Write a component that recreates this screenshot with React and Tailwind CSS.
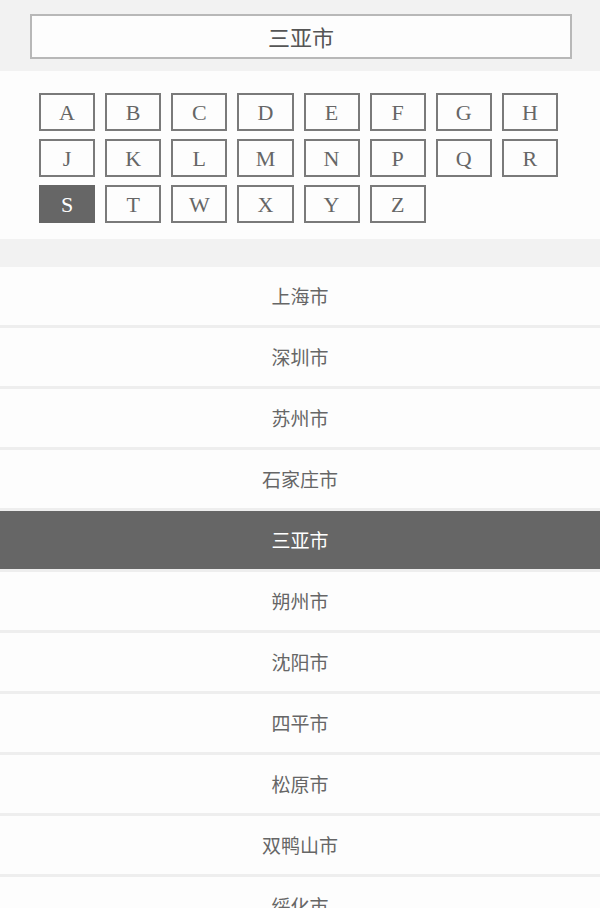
import React, { useState } from 'react';

const letters = ['A','B','C','D','E','F','G','H','J','K','L','M','N','P','Q','R','S','T','W','X','Y','Z'];

const cities = ['上海市','深圳市','苏州市','石家庄市','三亚市','朔州市','沈阳市','四平市','松原市','双鸭山市','绥化市'];

const cjk = { fontFamily: '"Noto Sans CJK SC", "Noto Sans", sans-serif' };
const serif = { fontFamily: '"Liberation Serif", "DejaVu Serif", serif' };

export default function App() {
  const [letter, setLetter] = useState('S');
  const [city, setCity] = useState('三亚市');

  return (
    <div className="w-[600px] min-h-[908px] bg-[#f2f2f2]" style={cjk}>
      <div className="pt-[14px] pb-[12px] pl-[30px] pr-[28px]">
        <div className="h-[45px] border-2 border-[#b8b8b8] bg-[#fdfdfd] flex items-center justify-center text-[22px] text-[#555]">
          {city}
        </div>
      </div>

      <div className="bg-[#fdfdfd] pt-[22px] pb-[16px] pl-[39px] pr-[42px]">
        <div className="grid grid-cols-8 gap-x-[10px] gap-y-[8px]">
          {letters.map((l) => (
            <button
              key={l}
              onClick={() => setLetter(l)}
              className={
                l === letter
                  ? 'h-[38px] border-2 border-[#666] bg-[#666] text-white text-[22px] flex items-center justify-center pt-[1px]'
                  : 'h-[38px] border-2 border-[#7a7a7a] bg-[#fdfdfd] text-[#666] text-[22px] flex items-center justify-center pt-[1px]'
              }
              style={serif}
            >
              {l}
            </button>
          ))}
        </div>
      </div>

      <div className="h-[28px]" />

      <div className="flex flex-col gap-[3px] bg-[#eeeeee]">
        {cities.map((c) => (
          <div
            key={c}
            onClick={() => setCity(c)}
            className={
              c === city
                ? 'h-[58px] bg-[#666] text-white text-[19px] flex items-center justify-center'
                : 'h-[58px] bg-[#fdfdfd] text-[#666] text-[19px] flex items-center justify-center'
            }
          >
            {c}
          </div>
        ))}
      </div>
    </div>
  );
}
